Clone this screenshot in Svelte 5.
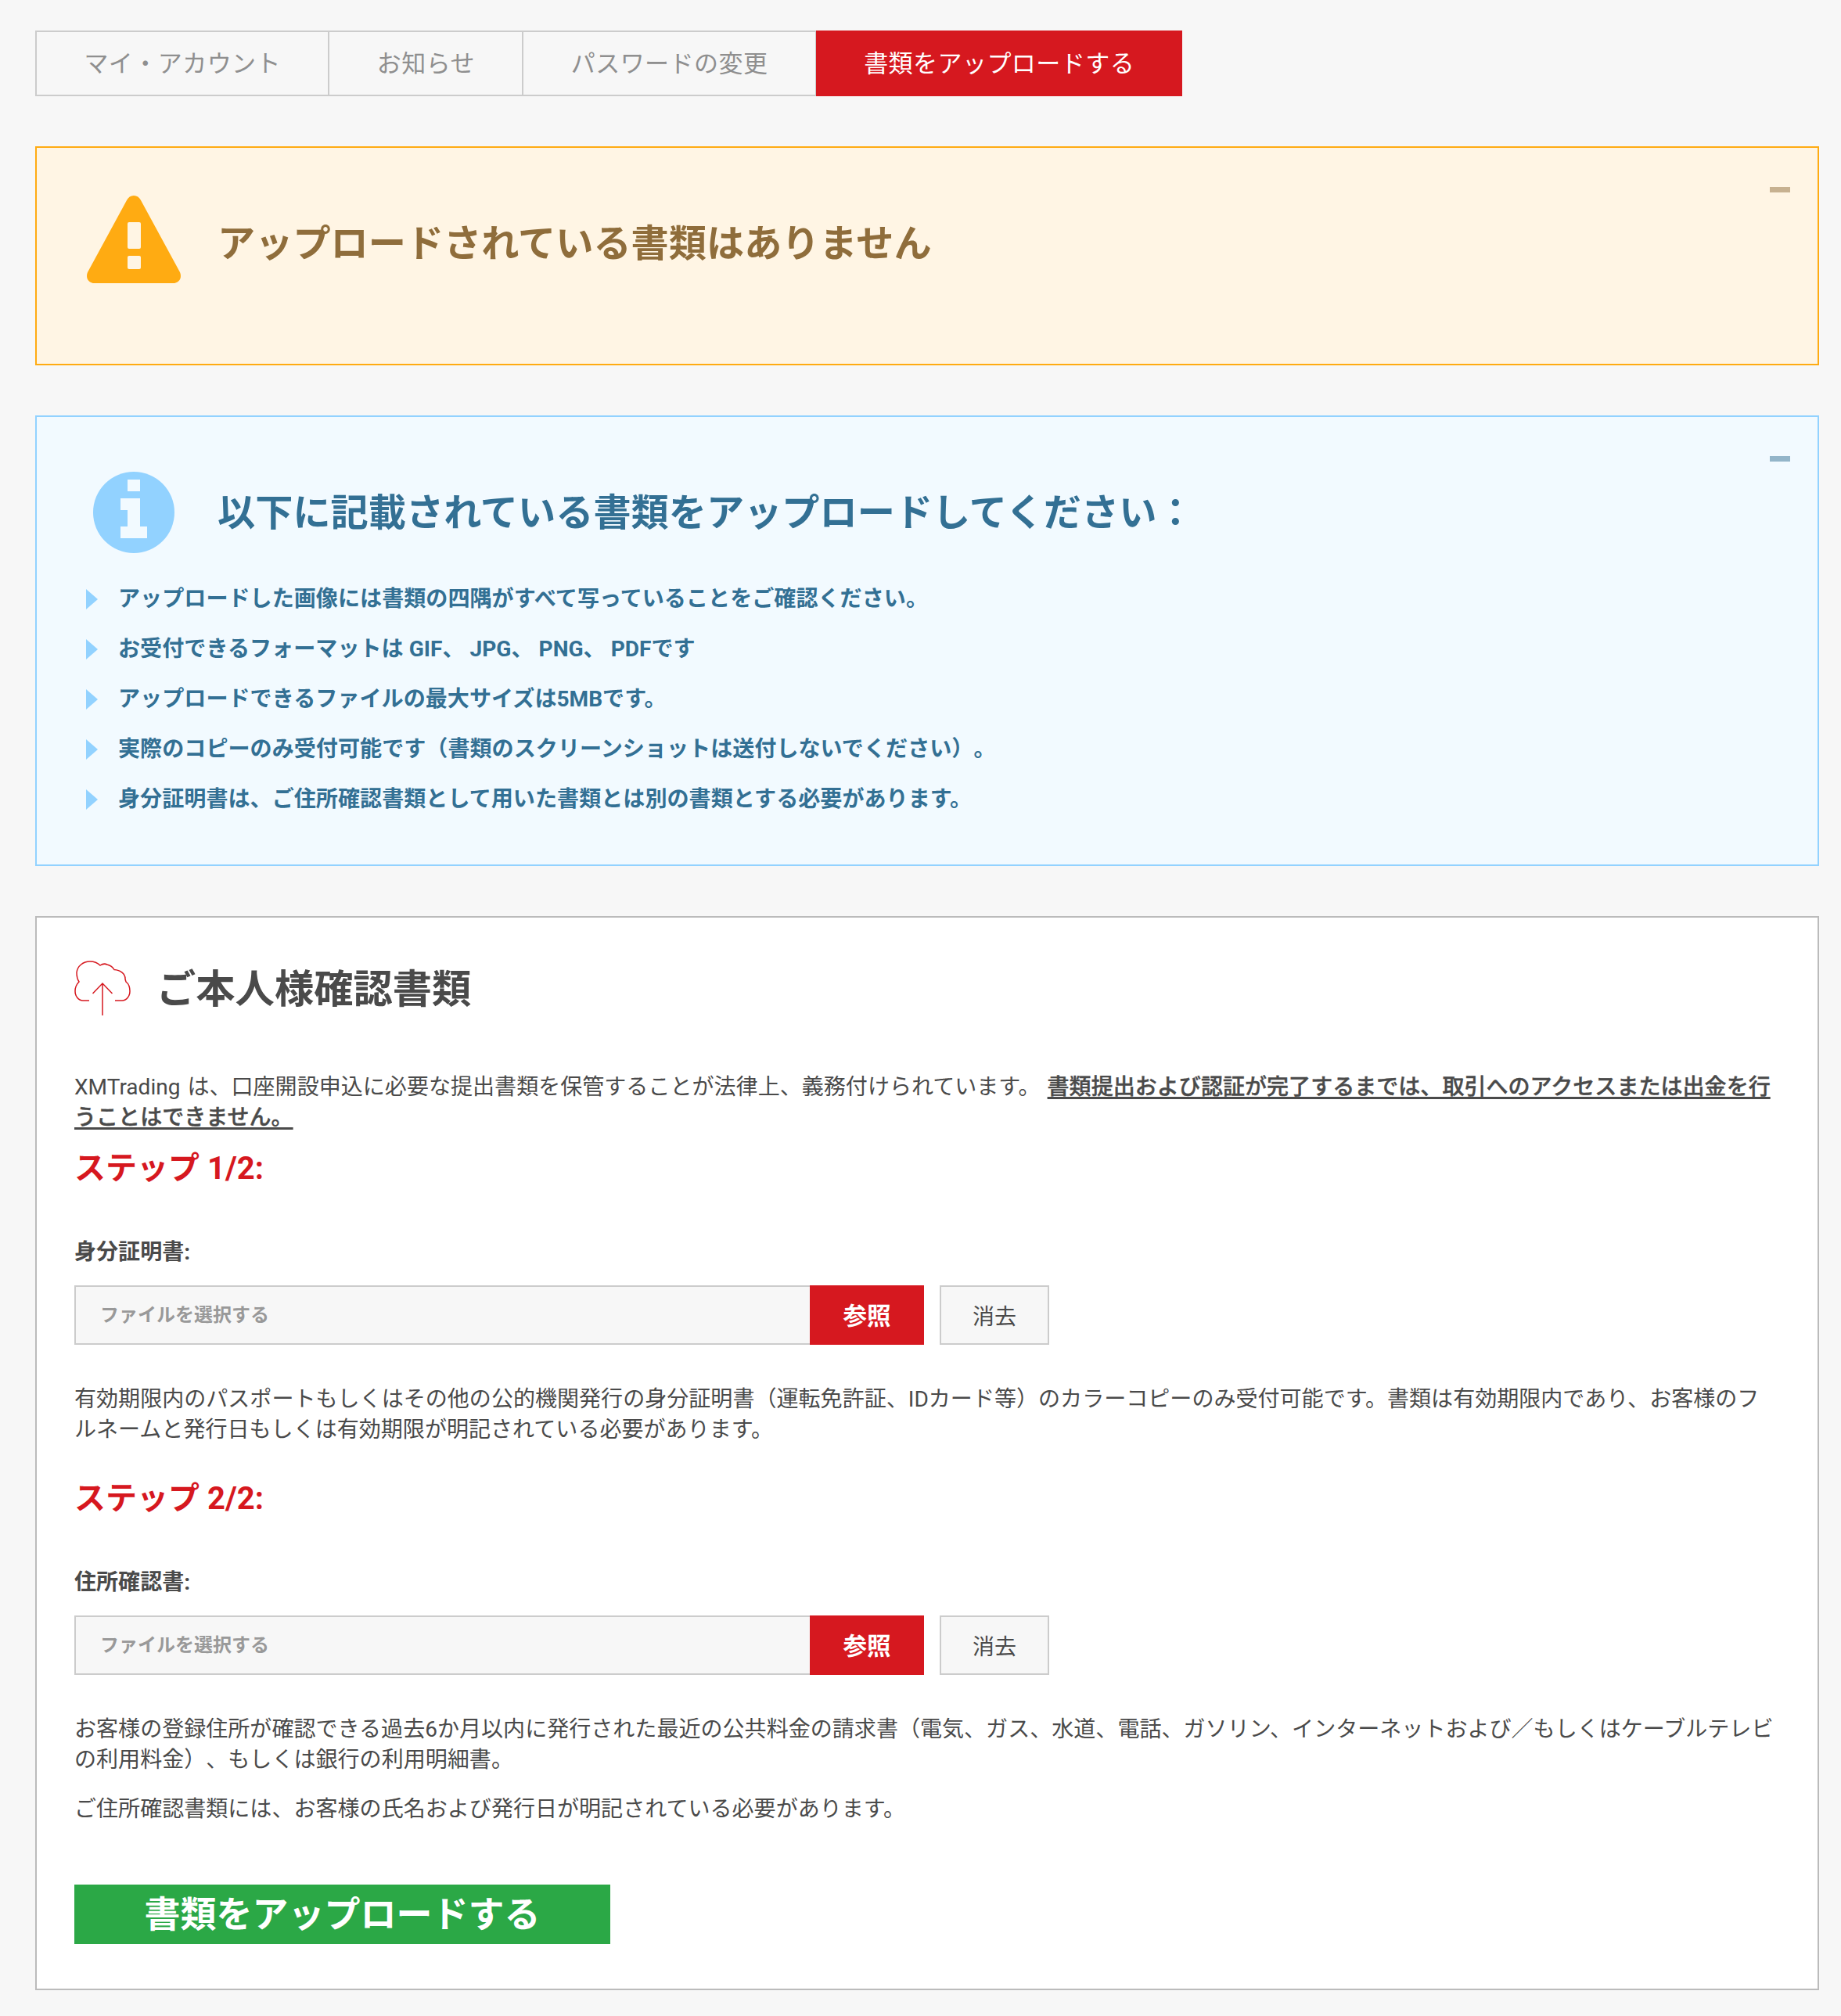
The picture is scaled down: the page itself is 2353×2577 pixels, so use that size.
<script>
  const tabs = [
    { label: 'マイ・アカウント' },
    { label: 'お知らせ' },
    { label: 'パスワードの変更' },
    { label: '書類をアップロードする', active: true }
  ];

  const rules = [
    'アップロードした画像には書類の四隅がすべて写っていることをご確認ください。',
    'お受付できるフォーマットは GIF、 JPG、 PNG、 PDFです',
    'アップロードできるファイルの最大サイズは5MBです。',
    '実際のコピーのみ受付可能です（書類のスクリーンショットは送付しないでください）。',
    '身分証明書は、ご住所確認書類として用いた書類とは別の書類とする必要があります。'
  ];
</script>

<div class="page">
  <nav class="tabs">
    {#each tabs as tab}
      <a class="tab" class:active={tab.active} href="#top">{tab.label}</a>
    {/each}
  </nav>

  <section class="alert warn">
    <span class="collapse"></span>
    <div class="alert-head">
      <svg class="alert-icon warn-icon" viewBox="0 0 122 112" aria-hidden="true">
        <path fill="#ffab12" d="M61 0c4 0 7 2 9 6l50 92c3 7-1 14-9 14H11C3 112-1 105 2 98L52 6c2-4 5-6 9-6z" />
        <rect x="53" y="34" width="17" height="34" rx="2" fill="#fff5e4" />
        <rect x="53" y="77" width="17" height="17" rx="2" fill="#fff5e4" />
      </svg>
      <h2>アップロードされている書類はありません</h2>
    </div>
  </section>

  <section class="alert info">
    <span class="collapse"></span>
    <div class="alert-head">
      <svg class="alert-icon" viewBox="0 0 122 104" aria-hidden="true">
        <circle cx="61" cy="52" r="52" fill="#92d2ff" />
        <path fill="#f2faff" d="M53 10h16v15H53zM44 34h25v36h9v15H44V70h9V49h-9z" />
      </svg>
      <h2>以下に記載されている書類をアップロードしてください：</h2>
    </div>
    <ul>
      {#each rules as rule}
        <li>{rule}</li>
      {/each}
    </ul>
  </section>

  <section class="card">
    <div class="card-head">
      <svg class="cloud" viewBox="0 0 72 72" aria-hidden="true" fill="none" stroke="#d6181f" stroke-width="1.5">
        <path d="M19 51H11C5 51 1 45 1 39C1 34 3 30 6 27C4 24 3 19 3 15C4 7 11 1 20 1C26 1 30 3 33 6C36 4 40 4 42 5C46 6 49 8 51 11.5C59 12 65 17 65 23C65 25 66 26 66 27C70 30 71 35 71 39C71 45 67 51 61 51H52" />
        <path d="M36 70V29M23.5 42L36 29L48.5 42" />
      </svg>
      <h2>ご本人様確認書類</h2>
    </div>

    <p class="intro">XMTrading は、口座開設申込に必要な提出書類を保管することが法律上、義務付けられています。 <strong>書類提出および認証が完了するまでは、取引へのアクセスまたは出金を行うことはできません。 </strong></p>

    <h3 class="step first">ステップ 1/2:</h3>
    <label class="file-label" for="id-doc">身分証明書:</label>
    <div class="file-row">
      <div class="file-box">
        <input id="id-doc" type="text" placeholder="ファイルを選択する" readonly />
        <button class="browse" type="button">参照</button>
      </div>
      <button class="clear" type="button">消去</button>
    </div>
    <p>有効期限内のパスポートもしくはその他の公的機関発行の身分証明書（運転免許証、IDカード等）のカラーコピーのみ受付可能です。書類は有効期限内であり、お客様のフルネームと発行日もしくは有効期限が明記されている必要があります。</p>

    <h3 class="step">ステップ 2/2:</h3>
    <label class="file-label" for="addr-doc">住所確認書:</label>
    <div class="file-row">
      <div class="file-box">
        <input id="addr-doc" type="text" placeholder="ファイルを選択する" readonly />
        <button class="browse" type="button">参照</button>
      </div>
      <button class="clear" type="button">消去</button>
    </div>
    <p>お客様の登録住所が確認できる過去6か月以内に発行された最近の公共料金の請求書（電気、ガス、水道、電話、ガソリン、インターネットおよび／もしくはケーブルテレビの利用料金）、もしくは銀行の利用明細書。</p>
    <p>ご住所確認書類には、お客様の氏名および発行日が明記されている必要があります。</p>

    <button class="submit" type="button">書類をアップロードする</button>
  </section>
</div>

<style>
  :global(body) {
    margin: 0;
    background: #f7f7f7;
  }

  .page {
    padding: 39px 28px 35px 45px;
    font-family: Roboto, "Noto Sans CJK JP", sans-serif;
    color: #4a4a4a;
    font-size: 28.05px;
    line-height: 39px;
    text-spacing-trim: space-all;
  }

  .tabs {
    display: flex;
    margin-bottom: 64px;
  }

  .tab {
    padding: 0 60.4px;
    height: 80px;
    line-height: 82px;
    border: 2px solid #ccc;
    border-left-width: 1px;
    border-right-width: 1px;
    font-size: 31px;
    letter-spacing: 0.45px;
    color: #8f8f8f;
    text-decoration: none;
  }

  .tab:first-child {
    border-left-width: 2px;
  }

  .tab.active {
    background: #d6181f;
    border-color: #d6181f;
    color: #fff;
  }

  .alert {
    position: relative;
    border: 2px solid;
    margin-bottom: 64px;
    padding: 61px 63px 0;
    box-sizing: border-box;
  }

  .warn {
    height: 280px;
    background: #fff5e4;
    border-color: #ffab12;
    color: #8f6d3b;
  }

  .info {
    height: 576px;
    background: #f2faff;
    border-color: #92d2ff;
    color: #337094;
  }

  .collapse {
    position: absolute;
    top: 50px;
    right: 35px;
    width: 26px;
    height: 7px;
    background: currentColor;
    opacity: 0.5;
  }

  .alert-head {
    display: flex;
    align-items: center;
    gap: 46px;
    min-height: 122px;
  }

  .alert-icon {
    width: 122px;
    flex: none;
  }

  .warn-icon {
    align-self: flex-start;
  }

  .alert-head h2 {
    margin: 2px 0 0;
    font-size: 48.2px;
    line-height: 60px;
    font-weight: 700;
  }

  .info ul {
    list-style: none;
    margin: 18px 0 0;
    padding: 0;
  }

  .info li {
    position: relative;
    padding-left: 41px;
    height: 64px;
    line-height: 64px;
    font-size: 28.1px;
    font-weight: 700;
  }

  .info li::before {
    content: "";
    position: absolute;
    left: 0;
    top: 19px;
    border-left: 15px solid #92d2ff;
    border-top: 13px solid transparent;
    border-bottom: 13px solid transparent;
  }

  .card {
    background: #fff;
    border: 2px solid #bbb;
    padding: 55px 48px 57px;
  }

  .card-head {
    display: flex;
    align-items: center;
    gap: 33px;
    margin-bottom: 70px;
  }

  .cloud {
    width: 72px;
    height: 72px;
    flex: none;
  }

  .card-head h2 {
    margin: 2px 0 0;
    font-size: 50.3px;
    line-height: 60px;
    font-weight: 700;
  }

  p {
    margin: 0 0 24px;
    padding-right: 2px;
  }

  .intro {
    margin-bottom: 0;
    word-spacing: 2px;
  }

  .intro strong {
    font-weight: 500;
    -webkit-text-stroke: 0.4px #4a4a4a;
    text-decoration: underline;
    text-decoration-thickness: 3px;
    text-underline-offset: 3px;
  }

  .step {
    margin: 44px 0 62px;
    font-size: 40px;
    line-height: 50px;
    font-weight: 700;
    color: #d6181f;
  }

  .step.first {
    margin-top: 21px;
  }

  .file-label {
    display: block;
    margin-bottom: 23px;
    font-weight: 700;
  }

  .file-row {
    display: flex;
    gap: 20px;
    margin-bottom: 50px;
  }

  .file-box {
    display: flex;
    width: 1086px;
    height: 76px;
  }

  .file-box input {
    flex: 1;
    min-width: 0;
    box-sizing: border-box;
    padding: 0 31px;
    border: 2px solid #ccc;
    border-right: 0;
    background: #f7f7f7;
    font: 700 24px Roboto, "Noto Sans CJK JP", sans-serif;
  }

  .file-box input::placeholder {
    color: #999;
  }

  .browse {
    width: 146px;
    padding: 0 0 3px;
    border: 0;
    background: #d6181f;
    color: #fff;
    font: 700 30.5px Roboto, "Noto Sans CJK JP", sans-serif;
  }

  .clear {
    width: 140px;
    height: 76px;
    padding: 0 0 1px;
    border: 2px solid #ccc;
    background: #f7f7f7;
    color: #4a4a4a;
    font: 400 28px Roboto, "Noto Sans CJK JP", sans-serif;
  }

  .submit {
    display: block;
    width: 685px;
    height: 76px;
    margin-top: 77px;
    padding: 0 0 8px;
    border: 0;
    background: #2ba846;
    color: #fff;
    font: 700 46px Roboto, "Noto Sans CJK JP", sans-serif;
  }
</style>
